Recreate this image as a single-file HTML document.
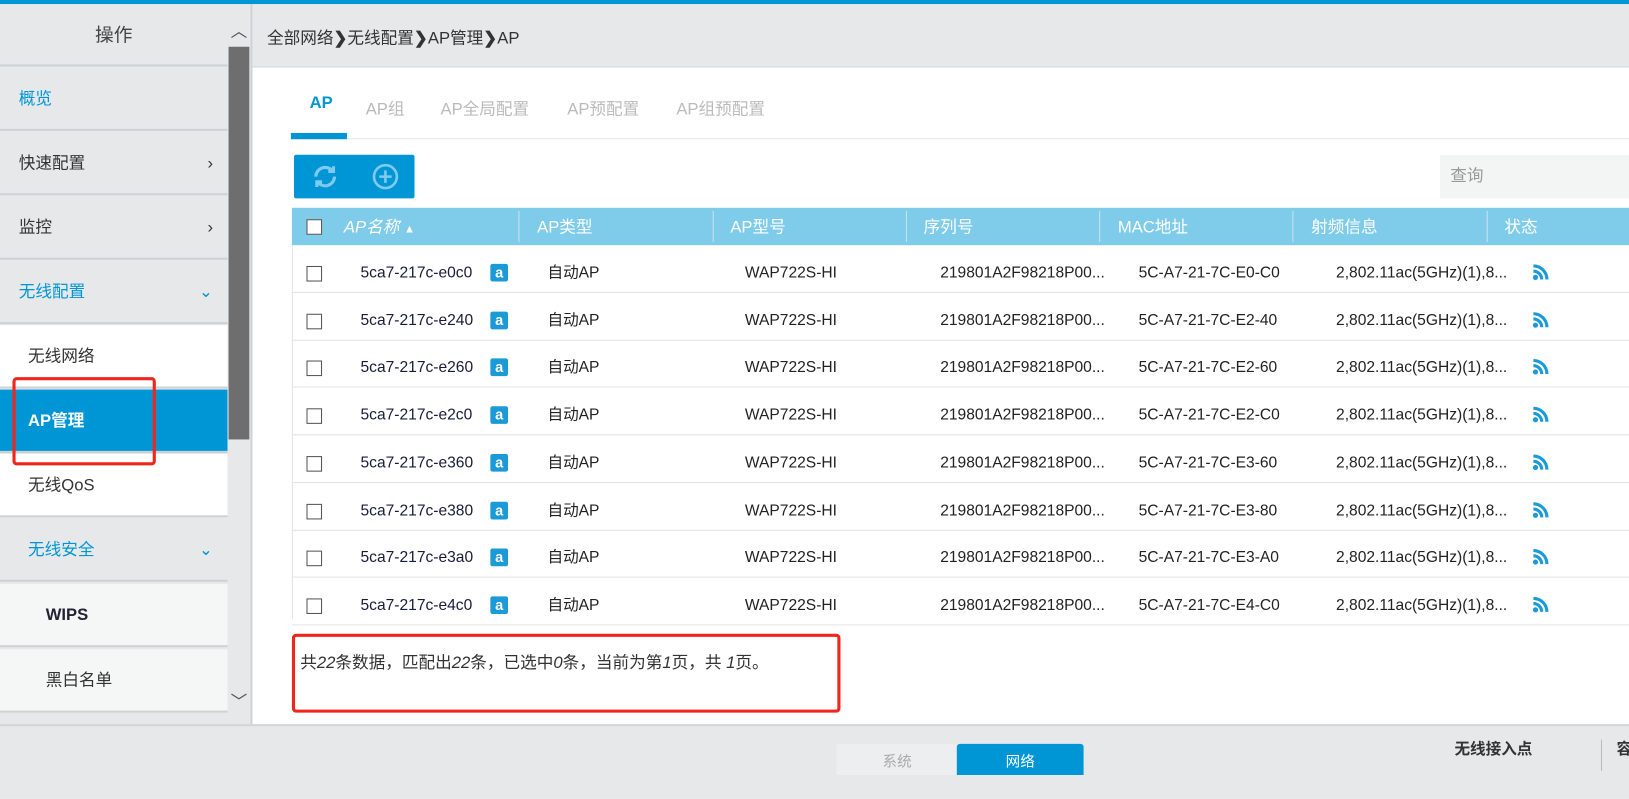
<!DOCTYPE html>
<html><head><meta charset="utf-8"><style>
*{margin:0;padding:0;box-sizing:border-box}
html,body{width:1629px;height:769px;overflow:hidden;background:#fff}
#w{position:absolute;left:0;top:0;width:1568px;height:740px;transform:scale(1.0389);transform-origin:0 0;font-family:"Liberation Sans","Noto Sans CJK SC",sans-serif;color:#333;font-size:15px}
.a{position:absolute}
.side div.it{position:absolute;left:0;width:219px;height:61px;line-height:61px;padding-left:18px;font-size:16px;border-bottom:2px solid #cfd2d4}
.chev{position:absolute;right:14px;top:0;font-size:16px}
.row{position:absolute;left:281px;width:1348px;height:46px;border-bottom:1px solid #e3e3e3;font-size:15px;color:#222}
.row span{position:absolute;top:4px;line-height:46px;height:46px}
.cb{position:absolute;width:15px;height:15px;border:1px solid #555;background:#fff}
.bd{display:inline-block;width:17px;height:17px;background:#1a9ad6;color:#fff;border-radius:2px;font-size:14px;line-height:16px;text-align:center;font-weight:bold}
.hd{position:absolute;top:2px;line-height:36px;color:#fff;font-size:16px}
.dv{position:absolute;top:3px;width:1px;height:30px;background:#c9e3ef}
</style></head><body><div id="w">
<div class="a" style="left:0;top:0;width:1568px;height:4px;background:#0096d6"></div>
<div class="a side" style="left:0;top:4px;width:219px;height:693px;background:#e6e8ea">
<div class="a" style="left:0;top:0;width:219px;height:60px;line-height:60px;text-align:center;font-size:18px;color:#444;border-bottom:2px solid #cfd2d4">操作</div>
<div class="it" style="top:61px;color:#0096d6">概览</div>
<div class="it" style="top:123px">快速配置<span class="chev">›</span></div>
<div class="it" style="top:185px">监控<span class="chev">›</span></div>
<div class="it" style="top:247px;color:#0096d6">无线配置<span class="chev" style="color:#0096d6">⌄</span></div>
<div class="it" style="top:309px;background:#fff;padding-left:27px">无线网络</div>
<div class="it" style="top:371px;background:#0096d6;color:#fff;padding-left:27px;font-weight:bold">AP管理</div>
<div class="it" style="top:433px;background:#fff;padding-left:27px">无线QoS</div>
<div class="it" style="top:495px;color:#0096d6;padding-left:27px">无线安全<span class="chev" style="color:#0096d6">⌄</span></div>
<div class="it" style="top:558px;background:#f5f6f6;padding-left:44px;font-weight:bold;color:#223">WIPS</div>
<div class="it" style="top:621px;background:#f5f6f6;padding-left:44px">黑白名单</div>
</div>
<div class="a" style="left:219px;top:4px;width:22px;height:693px;background:#e6e8ea"></div>
<div class="a" style="left:220px;top:45px;width:20px;height:378px;background:#6e6e6e"></div>
<div class="a" style="left:222px;top:16px;font-size:16px;color:#555">︿</div>
<div class="a" style="left:222px;top:662px;font-size:16px;color:#555">﹀</div>
<div class="a" style="left:241px;top:4px;width:2px;height:693px;background:#cfd2d4"></div>
<div class="a" style="left:12px;top:363px;width:138px;height:85px;border:3px solid #f0261c;border-radius:4px"></div>
<div class="a" style="left:243px;top:4px;width:1386px;height:61px;background:#e6e8ea;border-bottom:1px solid #d4d6d8"></div>
<div class="a" style="left:257px;top:23px;font-size:16px;color:#333">全部网络<b>❯</b>无线配置<b>❯</b>AP管理<b>❯</b>AP</div>
<div class="a" style="left:298px;top:91px;font-size:16px;color:#0096d6;font-weight:bold">AP</div>
<div class="a" style="left:352px;top:91px;font-size:16px;color:#bbb">AP组</div>
<div class="a" style="left:424px;top:91px;font-size:16px;color:#bbb">AP全局配置</div>
<div class="a" style="left:546px;top:91px;font-size:16px;color:#bbb">AP预配置</div>
<div class="a" style="left:651px;top:91px;font-size:16px;color:#bbb">AP组预配置</div>
<div class="a" style="left:280px;top:133px;width:1349px;height:1px;background:#e3e3e3"></div>
<div class="a" style="left:280px;top:128px;width:54px;height:6px;background:#0096d6"></div>
<div class="a" style="left:283px;top:149px;width:116px;height:42px;background:#0096d6;border-radius:2px"></div>
<svg class="a" style="left:300px;top:157px" width="26" height="26" viewBox="0 0 26 26" fill="none" stroke="#7fcbef" stroke-width="3"><path d="M4 13a9 9 0 0 1 16-5.5M22 13a9 9 0 0 1-16 5.5"/><path d="M21 3v5h-5M5 23v-5h5"/></svg>
<svg class="a" style="left:358px;top:157px" width="26" height="26" viewBox="0 0 26 26" fill="none" stroke="#7fcbef" stroke-width="2.5"><circle cx="13" cy="13" r="11"/><path d="M13 7v12M7 13h12"/></svg>
<div class="a" style="left:1386px;top:149px;width:243px;height:42px;background:#f3f4f4;color:#999;font-size:16px;line-height:42px;padding-left:10px">查询</div>
<div class="a" style="left:281px;top:200px;width:1348px;height:36px;background:#7ecbea">
<div class="cb" style="left:14px;top:11px"></div>
<div class="hd" style="left:50px;font-style:italic">AP名称 <span style="font-size:11px">▲</span></div>
<div class="dv" style="left:218px"></div><div class="hd" style="left:236px">AP类型</div>
<div class="dv" style="left:405px"></div><div class="hd" style="left:422px">AP型号</div>
<div class="dv" style="left:591px"></div><div class="hd" style="left:608px">序列号</div>
<div class="dv" style="left:777px"></div><div class="hd" style="left:795px">MAC地址</div>
<div class="dv" style="left:963px"></div><div class="hd" style="left:981px">射频信息</div>
<div class="dv" style="left:1150px"></div><div class="hd" style="left:1167px">状态</div>
</div>
<div class="a" style="left:281px;top:236px;width:1px;height:360px;background:#e3e3e3"></div>
<div class="a" style="left:289px;top:624px;font-size:16px;color:#333">共<i>22</i>条数据，匹配出<i>22</i>条，已选中<i>0</i>条，当前为第<i>1</i>页，共 <i>1</i>页。</div>
<div class="a" style="left:281px;top:610px;width:528px;height:76px;border:3px solid #f0261c;border-radius:4px"></div>
<div class="a" style="left:0;top:697px;width:1629px;height:72px;background:#e6e8ea;border-top:2px solid #d4d6d8"></div>
<div class="a" style="left:805px;top:716px;width:117px;height:30px;background:#eceef0;color:#aaa;text-align:center;line-height:34px;font-size:14px;border-radius:3px 0 0 0">系统</div>
<div class="a" style="left:921px;top:716px;width:122px;height:30px;background:#0096d6;color:#fff;text-align:center;line-height:34px;font-size:14px;border-radius:3px 3px 0 0">网络</div>
<div class="a" style="left:1400px;top:710px;font-size:15px;font-weight:bold;color:#333">无线接入点</div>
<div class="a" style="left:1541px;top:712px;width:1px;height:30px;background:#bbb"></div>
<div class="a" style="left:1556px;top:710px;font-size:15px;font-weight:bold;color:#333">容</div>
</div>
<script>
var n=["e0c0","e240","e260","e2c0","e360","e380","e3a0","e4c0"],m=["E0-C0","E2-40","E2-60","E2-C0","E3-60","E3-80","E3-A0","E4-C0"],h="";
for(var i=0;i<8;i++){var t=236+i*45.7;h+='<div class="row" style="top:'+t+'px"><div class="cb" style="left:14px;top:20px"></div><span style="left:66px;color:#1a1a3a">5ca7-217c-'+n[i]+'</span><span style="left:191px;top:18px;height:17px;line-height:16px" class="bd">a</span><span style="left:246px">自动AP</span><span style="left:436px">WAP722S-HI</span><span style="left:624px">219801A2F98218P00...</span><span style="left:815px">5C-A7-21-7C-'+m[i]+'</span><span style="left:1005px">2,802.11ac(5GHz)(1),8...</span><svg style="position:absolute;left:1194px;top:18px" width="18" height="16" viewBox="0 0 18 16"><circle cx="3" cy="13" r="2.5" fill="#1a9ad6"/><path d="M1 7a8 8 0 0 1 8 8M1 2a13 13 0 0 1 13 13" stroke="#1a9ad6" stroke-width="3" fill="none"/></svg></div>';}
var d=document.createElement("div");d.innerHTML=h;document.getElementById("w").appendChild(d);
</script>
</body></html>
